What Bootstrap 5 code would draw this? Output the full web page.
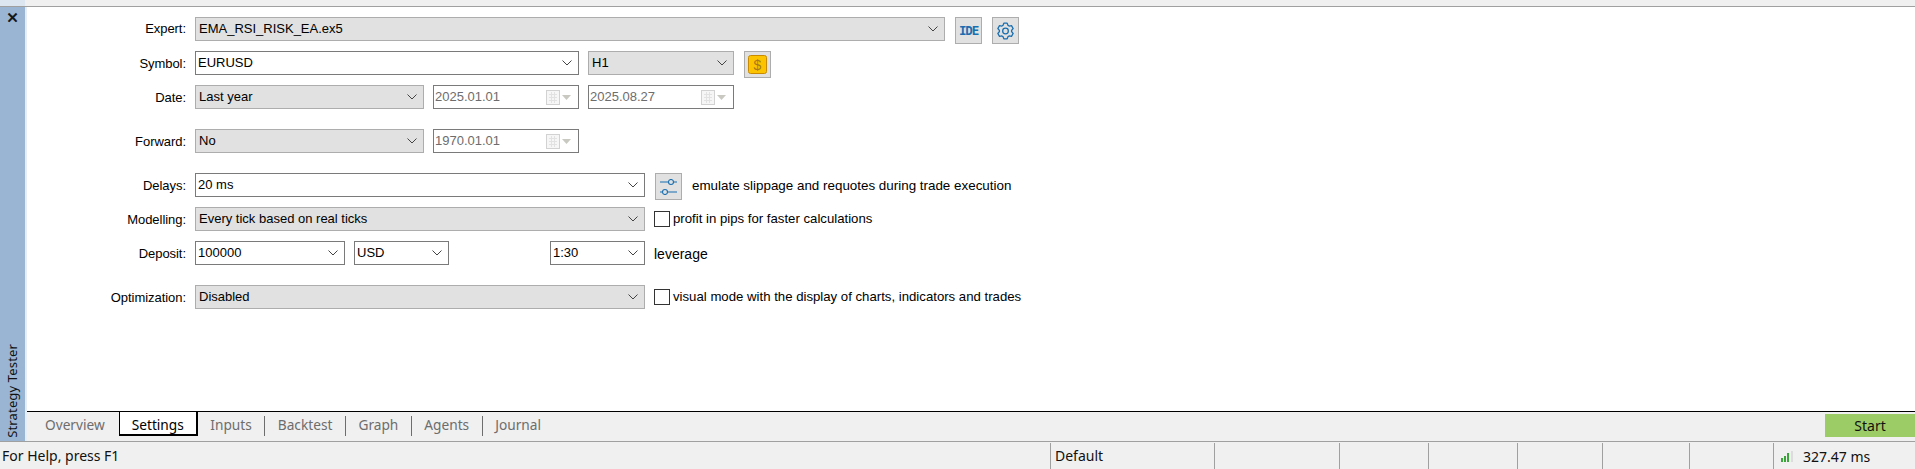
<!doctype html>
<html lang="en">
<head>
<meta charset="utf-8">
<title>Strategy Tester</title>
<link href="https://cdn.jsdelivr.net/npm/bootstrap@5.3.0/dist/css/bootstrap.min.css" rel="stylesheet">
<style>
html,body{height:469px;overflow:hidden;background:#fff;}
body{font-family:"Liberation Sans",Arial,sans-serif;font-size:13px;color:#000;}
.shell{height:469px;}
.top-strip{height:7px;background:#f0f0f0;border-bottom:1px solid #a0a0a0;flex:none;}
.top-tab{width:25px;height:6px;background:#dce6f1;}
.work{height:434px;flex:none;min-height:0;}
.side-rail{width:25px;background:#9ab5d3;flex:none;}
.rail-close{font-family:"DejaVu Sans",sans-serif;font-size:15px;font-weight:700;line-height:15px;margin-top:4px;text-align:center;color:#111;-webkit-text-stroke:.5px #111;}
.rail-title{font-family:"Noto Sans",sans-serif;font-size:13px;line-height:25px;writing-mode:vertical-rl;transform:rotate(180deg);color:#111;padding-top:3px;letter-spacing:.15px;}
.rail-edge{width:2px;background:#e6edf5;flex:none;}
.settings-pane{padding-top:10px;min-height:0;}
.form-line{height:24px;margin-top:10px;}
.form-line.spaced{margin-top:20px;}
.form-line:first-child{margin-top:0;}
.line-label{width:159px;text-align:right;margin-right:9px;flex:none;line-height:26px;letter-spacing:-.05px;}
.form-line:first-child .line-label{line-height:24px;}
.mt-select.form-select{height:24px;border-radius:0;font-size:13px;line-height:20px;padding:0 18px 1px 2px;border:1px solid #7a7a7a;color:#000;flex:none;box-shadow:none;
background-image:url("data:image/svg+xml,%3csvg xmlns='http://www.w3.org/2000/svg' viewBox='0 0 10 6'%3e%3cpath fill='none' stroke='%23444' d='M.5.5 5 5 9.500.5'/%3e%3c/svg%3e");background-size:10px 6px;background-position:right 6px center;}
.mt-select.locked{background-color:#e1e1e1;border-color:#adadad;padding-left:3px;}
.date-box{height:24px;border:1px solid #7a7a7a;color:#6d6d6d;padding:0 7px 0 1px;flex:none;width:146px;}
.icon-btn{width:27px;height:27px;background:#e1e1e1;border:1px solid #adadad;border-radius:0;padding:0;flex:none;align-self:flex-start;}
.ide-mark{font-family:"DejaVu Sans Mono","Liberation Mono",monospace;font-weight:700;font-size:12.5px;letter-spacing:-1.2px;color:#1a6fb0;line-height:25px;}
.w-229{width:229px;}.w-146{width:146px;}.w-750{width:750px;}.w-450{width:450px;}.w-149{width:150px;}.w-95{width:95px;}
.gap-9{margin-left:9px;}.gap-10{margin-left:10px;}
.note{line-height:26px;white-space:nowrap;font-size:13.2px;}
.note.wide{font-size:13.4px;line-height:26px;}
.note.lever{font-size:14px;}
.tick-wrap{margin-left:9px;}
.tick-box{width:16px;height:16px;border:1px solid #333;background:#fff;flex:none;margin-right:3px;}
.tab-row{height:30px;flex:none;background:#f0f0f0;border-top:1px solid #000;font-family:"Noto Sans",sans-serif;font-size:13.7px;}
.tab-list{padding-left:0;margin:0;}
.tab-item.nav-link{color:#6d6d6d;padding:0 12.500px;height:20px;line-height:18px;margin-top:4px;border-right:1px solid #6d6d6d;font-size:13.7px;}
.tab-item.first{padding-left:18px;padding-right:14px;border-right:0;}
.tab-item.current{color:#000;background:#fff;height:25px;margin-top:-1px;border:1px solid #000;border-right-width:2px;border-bottom-width:2px;padding:0 12px;line-height:26px;}
.tab-item.last{border-right:0;}
.go-btn.btn{width:90px;height:23px;background:#9ccc65;border:0;border-radius:0;margin-top:2px;color:#111;font-size:14px;padding:0;line-height:22px;font-family:"Noto Sans",sans-serif;}
.status-row{height:28px;flex:none;background:#f0f0f0;border-top:1px solid #a0a0a0;font-family:"Noto Sans",sans-serif;font-size:14px;color:#111;}
.status-cell{border-left:1px solid #a0a0a0;height:26px;margin-top:1px;line-height:25px;padding-left:4px;flex:none;white-space:nowrap;}
.status-help{width:1050px;padding-left:2px;line-height:28px;flex:none;}
.cw-164{width:164px;}.cw-125{width:125px;}.cw-89{width:89px;}.cw-85{width:85px;}.cw-87{width:87px;}.cw-84{width:84px;}.cw-142{width:142px;}
</style>
</head>
<body>
<div class="shell d-flex flex-column">
  <div class="top-strip"><div class="top-tab"></div></div>
  <div class="work d-flex">
    <aside class="side-rail d-flex flex-column align-items-center justify-content-between">
      <div class="rail-close">✕</div>
      <div class="rail-title">Strategy Tester</div>
    </aside>
    <div class="rail-edge"></div>
    <div class="flex-grow-1 d-flex flex-column">
      <div class="settings-pane flex-grow-1">
        <div class="form-line d-flex">
          <div class="line-label">Expert:</div>
          <select class="form-select mt-select locked w-750"><option>EMA_RSI_RISK_EA.ex5</option></select>
          <button class="icon-btn btn gap-10 d-flex justify-content-center"><span class="ide-mark">IDE</span></button>
          <button class="icon-btn btn gap-10 d-flex align-items-center justify-content-center" aria-label="Options">
            <svg width="17" height="18" viewBox="0 0 18 19" fill="none" stroke="#1a6fb0" stroke-width="1.400" stroke-linejoin="round"><path d="M7.230 1.190H10.770L11.640 3.560 12.820 4.240 15.320 3.810 17.080 6.870 15.460 8.820V10.180L17.080 12.130 15.320 15.190 12.820 14.760 11.640 15.440 10.770 17.810H7.230L6.360 15.440 5.180 14.760 2.680 15.190 .92 12.130 2.540 10.180V8.820L.92 6.870 2.680 3.810 5.180 4.240 6.360 3.560Z"/><circle cx="9" cy="9.500" r="3"/></svg>
          </button>
        </div>
        <div class="form-line d-flex">
          <div class="line-label">Symbol:</div>
          <select class="form-select mt-select" style="width:384px"><option>EURUSD</option></select>
          <select class="form-select mt-select locked gap-9 w-146"><option>H1</option></select>
          <button class="icon-btn btn gap-10 d-flex align-items-center justify-content-center" aria-label="Currency">
            <svg width="19" height="19" viewBox="0 0 19 19"><rect x=".5" y=".5" width="18" height="18" rx="2" fill="#fcc400" stroke="#c98a00"/><text x="9.500" y="14.500" text-anchor="middle" font-family="Liberation Sans,sans-serif" font-size="14" fill="#a9781a">$</text></svg>
          </button>
        </div>
        <div class="form-line d-flex">
          <div class="line-label">Date:</div>
          <select class="form-select mt-select locked w-229"><option>Last year</option></select>
          <div class="date-box gap-9 d-flex align-items-center justify-content-between"><span>2025.01.01</span>
            <svg width="25" height="15" viewBox="0 0 25 15"><rect x=".5" y=".5" width="13" height="14" fill="#f6f6f6" stroke="#d2d2d2"/><path d="M3 4.500h8M3 7.500h8M3 10.500h8M5.500 2v11M8.500 2v11" stroke="#e2e2e2"/><path d="M16 5h9l-4.500 5z" fill="#c9c9c2"/></svg></div>
          <div class="date-box gap-9 d-flex align-items-center justify-content-between"><span>2025.08.27</span>
            <svg width="25" height="15" viewBox="0 0 25 15"><rect x=".5" y=".5" width="13" height="14" fill="#f6f6f6" stroke="#d2d2d2"/><path d="M3 4.500h8M3 7.500h8M3 10.500h8M5.500 2v11M8.500 2v11" stroke="#e2e2e2"/><path d="M16 5h9l-4.500 5z" fill="#c9c9c2"/></svg></div>
        </div>
        <div class="form-line spaced d-flex">
          <div class="line-label">Forward:</div>
          <select class="form-select mt-select locked w-229"><option>No</option></select>
          <div class="date-box gap-9 d-flex align-items-center justify-content-between"><span>1970.01.01</span>
            <svg width="25" height="15" viewBox="0 0 25 15"><rect x=".5" y=".5" width="13" height="14" fill="#f6f6f6" stroke="#d2d2d2"/><path d="M3 4.500h8M3 7.500h8M3 10.500h8M5.500 2v11M8.500 2v11" stroke="#e2e2e2"/><path d="M16 5h9l-4.500 5z" fill="#c9c9c2"/></svg></div>
        </div>
        <div class="form-line spaced d-flex">
          <div class="line-label">Delays:</div>
          <select class="form-select mt-select w-450"><option>20 ms</option></select>
          <button class="icon-btn btn gap-10 d-flex align-items-center justify-content-center" aria-label="Delay settings">
            <svg width="17" height="16" viewBox="0 0 17 16" fill="none" stroke="#1a6fb0" stroke-width="1.100"><path d="M0 3h8.500M13.500 3H17M0 13h2.500M7.500 13H17"/><circle cx="11" cy="3" r="2.500"/><circle cx="5" cy="13" r="2.500"/></svg>
          </button>
          <div class="note wide gap-10">emulate slippage and requotes during trade execution</div>
        </div>
        <div class="form-line d-flex">
          <div class="line-label">Modelling:</div>
          <select class="form-select mt-select locked w-450"><option>Every tick based on real ticks</option></select>
          <div class="tick-wrap d-flex align-items-center"><span class="tick-box"></span><span class="note">profit in pips for faster calculations</span></div>
        </div>
        <div class="form-line d-flex">
          <div class="line-label">Deposit:</div>
          <select class="form-select mt-select w-149"><option>100000</option></select>
          <select class="form-select mt-select gap-9 w-95"><option>USD</option></select>
          <select class="form-select mt-select w-95" style="margin-left:101px"><option>1:30</option></select>
          <div class="note lever gap-9">leverage</div>
        </div>
        <div class="form-line spaced d-flex">
          <div class="line-label">Optimization:</div>
          <select class="form-select mt-select locked w-450"><option>Disabled</option></select>
          <div class="tick-wrap d-flex align-items-center"><span class="tick-box"></span><span class="note">visual mode with the display of charts, indicators and trades</span></div>
        </div>
      </div>
      <div class="tab-row d-flex justify-content-between">
        <ul class="nav tab-list">
          <li><a class="nav-link tab-item first">Overview</a></li>
          <li><a class="nav-link tab-item current">Settings</a></li>
          <li><a class="nav-link tab-item">Inputs</a></li>
          <li><a class="nav-link tab-item">Backtest</a></li>
          <li><a class="nav-link tab-item">Graph</a></li>
          <li><a class="nav-link tab-item">Agents</a></li>
          <li><a class="nav-link tab-item last">Journal</a></li>
        </ul>
        <button class="btn go-btn">Start</button>
      </div>
    </div>
  </div>
  <footer class="status-row d-flex">
    <div class="status-help">For Help, press F1</div>
    <div class="status-cell cw-164">Default</div>
    <div class="status-cell cw-125"></div>
    <div class="status-cell cw-89"></div>
    <div class="status-cell cw-89"></div>
    <div class="status-cell cw-85"></div>
    <div class="status-cell cw-87"></div>
    <div class="status-cell cw-84"></div>
    <div class="status-cell cw-142 d-flex align-items-center">
      <svg class="me-2" width="17" height="12" viewBox="0 0 17 12"><path d="M3 8h2v4H3zM6 6h2v6H6zM9 3h2v9H9z" fill="#3aa63a"/><path d="M13 1h2v11h-2z" fill="#dcdcdc"/></svg><span>327.47 ms</span>
    </div>
  </footer>
</div>
<script src="https://cdn.jsdelivr.net/npm/bootstrap@5.3.0/dist/js/bootstrap.bundle.min.js"></script>
</body>
</html>
